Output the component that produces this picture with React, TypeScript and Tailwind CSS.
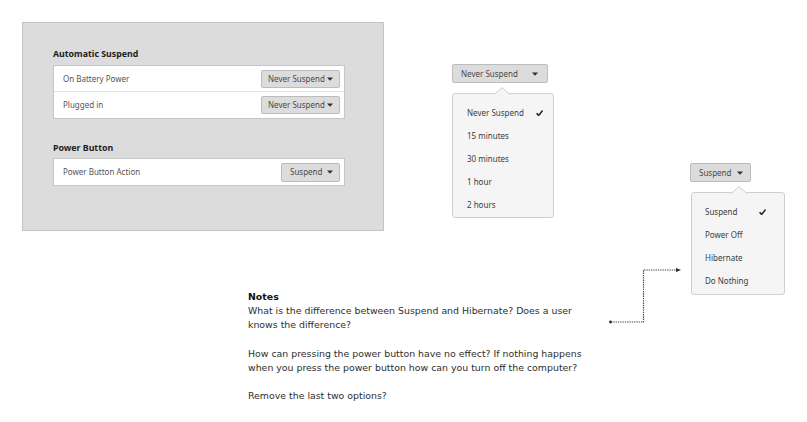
const ui = { fontFamily: '"Noto Sans", "Open Sans", sans-serif' };
const notesFont = { fontFamily: '"DejaVu Sans", Verdana, sans-serif' };

function Caret() {
  return (
    <svg width="6" height="4" viewBox="0 0 6 4" className="shrink-0">
      <path d="M0 0.5 L6 0.5 L3 3.8 Z" fill="#2e2e2e" />
    </svg>
  );
}

function Check() {
  return (
    <svg width="7" height="6" viewBox="0 0 7 6" className="shrink-0">
      <path d="M0.6 3.2 L2.6 5.4 L6.6 0.6" fill="none" stroke="#2a2a2a" strokeWidth="1.6" strokeLinejoin="round" />
    </svg>
  );
}

function Combo({ label, className }: { label: string; className: string }) {
  return (
    <div
      className={`flex items-center justify-between rounded-[2px] border border-[#bcbcbc] bg-[#dcdcdc] text-[8px] text-[#4a4a4a] ${className}`}
    >
      <span className="leading-none">{label}</span>
      <Caret />
    </div>
  );
}

function Row({ label, value, combo, last }: { label: string; value: string; combo: string; last?: boolean }) {
  return (
    <div className={`flex h-[26px] items-center justify-between pl-[9px] pr-[4px] ${last ? '' : 'border-b border-[#e2e2e2]'}`}>
      <span className="text-[8px] leading-none text-[#555]">{label}</span>
      <Combo label={value} className={combo} />
    </div>
  );
}

function Popover({
  items,
  selected,
  tip,
  className,
  itemClass,
}: {
  items: string[];
  selected: string;
  tip: number;
  className: string;
  itemClass: string;
}) {
  return (
    <div className={`relative rounded-[3px] border border-[#cfcfcf] bg-[#f5f5f5] ${className}`}>
      <svg width="16" height="8" viewBox="0 0 16 8" className="absolute top-[-7px]" style={{ left: tip - 8 }}>
        <path d="M0 7.5 L8 0.5 L16 7.5" fill="#f5f5f5" stroke="#cfcfcf" strokeWidth="1" />
        <rect x="1" y="7" width="14" height="1.5" fill="#f5f5f5" />
      </svg>
      {items.map((it) => (
        <div key={it} className={`flex h-[23px] items-center justify-between text-[8px] text-[#3c3c3c] ${itemClass}`}>
          <span className="leading-none">{it}</span>
          {it === selected && <Check />}
        </div>
      ))}
    </div>
  );
}

export default function App() {
  return (
    <div className="relative h-[422px] w-[807px] overflow-hidden bg-white" style={ui}>
      {/* settings panel */}
      <div className="absolute left-[22px] top-[22px] h-[209px] w-[362px] border border-[#c4c4c4] bg-[#dcdcdc] pl-[30px] pr-[38px] pt-[25px]">
        <div className="mb-[5px] text-[8.8px] font-bold leading-[12px] text-[#1e1e1e]">Automatic Suspend</div>
        <div className="border border-[#c6c6c6] bg-white">
          <Row label="On Battery Power" value="Never Suspend" combo="h-[18px] w-[79px] pl-[6px] pr-[6px]" />
          <Row label="Plugged in" value="Never Suspend" combo="h-[18px] w-[79px] pl-[6px] pr-[6px]" last />
        </div>
        <div className="mb-[4px] mt-[23px] text-[8.8px] font-bold leading-[12px] text-[#1e1e1e]">Power Button</div>
        <div className="border border-[#c6c6c6] bg-white">
          <Row label="Power Button Action" value="Suspend" combo="h-[19px] w-[59px] pl-[8px] pr-[6px]" last />
        </div>
      </div>

      {/* dropdown: suspend time */}
      <div className="absolute left-[452px] top-[64px] flex flex-col">
        <Combo label="Never Suspend" className="h-[19px] w-[96px] pl-[8px] pr-[9px]" />
        <Popover
          items={['Never Suspend', '15 minutes', '30 minutes', '1 hour', '2 hours']}
          selected="Never Suspend"
          tip={49}
          className="mt-[10px] w-[102px] pb-[1px] pt-[7px]"
          itemClass="pl-[14px] pr-[10px]"
        />
      </div>

      {/* dropdown: power button */}
      <div className="absolute left-[690px] top-[163px] flex flex-col">
        <Combo label="Suspend" className="h-[19px] w-[61px] pl-[8px] pr-[7px]" />
        <Popover
          items={['Suspend', 'Power Off', 'Hibernate', 'Do Nothing']}
          selected="Suspend"
          tip={47}
          className="ml-[1px] mt-[10px] w-[94px] pb-[2px] pt-[7px]"
          itemClass="pl-[13px] pr-[18px]"
        />
      </div>

      {/* connector */}
      <svg className="absolute left-0 top-0" width="807" height="422">
        <path d="M611 322 H643.5 V270 H677" fill="none" stroke="#4a4a4a" strokeWidth="1.2" strokeDasharray="1.4 0.9" />
        <circle cx="610.5" cy="322" r="1.4" fill="#2a2a2a" />
        <path d="M676 268 L681 270 L676 272 Z" fill="#2a2a2a" />
      </svg>

      {/* notes */}
      <div className="absolute left-[248px] top-[290px] whitespace-nowrap text-[9.4px] leading-[14.2px] text-[#2e2e2e]" style={notesFont}>
        <div className="font-bold text-[#111]">Notes</div>
        <div>What is the difference between Suspend and Hibernate? Does a user</div>
        <div>knows the difference?</div>
        <div className="h-[14.2px]" />
        <div>How can pressing the power button have no effect? If nothing happens</div>
        <div>when you press the power button how can you turn off the computer?</div>
        <div className="h-[14.2px]" />
        <div>Remove the last two options?</div>
      </div>
    </div>
  );
}
